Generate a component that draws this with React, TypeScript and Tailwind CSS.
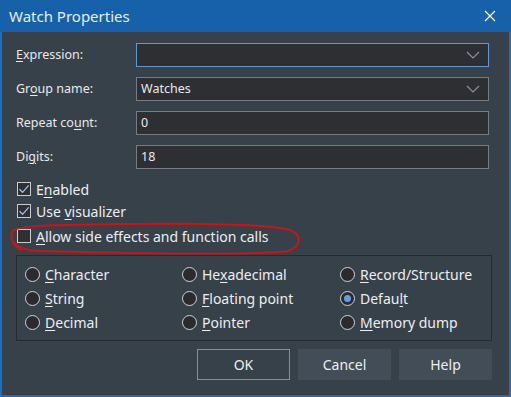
import React from "react";

const font = { fontFamily: '"Noto Sans", "Open Sans", sans-serif' };

function U({ children }: { children: React.ReactNode }) {
  return <span className="underline underline-offset-2 decoration-1">{children}</span>;
}

function Chevron() {
  return (
    <svg width="14" height="8" viewBox="0 0 14 8" className="shrink-0">
      <path d="M1 1 L7 7 L13 1" fill="none" stroke="#8a9099" strokeWidth="1.2" />
    </svg>
  );
}

function Field({
  label,
  value,
  combo,
  focused,
}: {
  label: React.ReactNode;
  value?: string;
  combo?: boolean;
  focused?: boolean;
}) {
  return (
    <div className="flex items-center h-[24px]">
      <div className="w-[120px] text-[12.5px] text-[#e8eaec]">{label}</div>
      <div
        className={`w-[353px] h-[24px] flex items-center justify-between pl-[4px] pr-[8px] bg-[#2e2f33] border ${
          focused ? "border-[#5b9ad6]" : "border-[#767c84]"
        } text-[12.5px] text-[#e8eaec]`}
      >
        <span>{value}</span>
        {combo && <Chevron />}
      </div>
    </div>
  );
}

function Check({ checked, children }: { checked?: boolean; children: React.ReactNode }) {
  return (
    <div className="flex items-center gap-[5px] text-[14px] text-[#eceef0]">
      <div className="w-[14px] h-[14px] border border-[#c9ccd0] bg-[#2e3035] flex items-center justify-center">
        {checked && (
          <svg width="12" height="12" viewBox="0 0 12 12">
            <path d="M1.5 6.2 L4.6 9.3 L10.6 2.3" fill="none" stroke="#9cc3ea" strokeWidth="1.3" />
          </svg>
        )}
      </div>
      <span>{children}</span>
    </div>
  );
}

function Radio({ checked, children }: { checked?: boolean; children: React.ReactNode }) {
  return (
    <div className="flex items-center gap-[5px] h-[24px] text-[14px] text-[#eceef0]">
      <div className="w-[15px] h-[15px] rounded-full border border-[#d2d4d7] bg-[#2a2b2f] flex items-center justify-center">
        {checked && <div className="w-[7px] h-[7px] rounded-full bg-[#5aa3e6]" />}
      </div>
      <span>{children}</span>
    </div>
  );
}

function Btn({ children, primary }: { children: React.ReactNode; primary?: boolean }) {
  return (
    <div
      className={`w-[93px] h-[31px] flex items-center justify-center text-[14px] text-[#eceef0] ${
        primary ? "border border-[#5b9ad6] bg-[#37414a]" : "bg-[#434d57]"
      }`}
    >
      {children}
    </div>
  );
}

export default function App() {
  return (
    <div
      style={font}
      className="w-[511px] h-[397px] bg-[#1c6fc4] px-[2px] pb-[2px] flex flex-col relative overflow-hidden"
    >
      <div className="h-[32px] bg-[#1661aa] -mx-[2px] flex items-center justify-between pl-[9px] pr-[15px]">
        <span className="text-[15px] text-[#e6edf5]">Watch Properties</span>
        <svg width="12" height="12" viewBox="0 0 12 12">
          <path d="M1 1 L11 11 M11 1 L1 11" stroke="#ffffff" strokeWidth="1.3" />
        </svg>
      </div>
      <div className="flex-1 bg-[#37414a] pl-[14px] pt-[11px] flex flex-col">
        <div className="flex flex-col gap-[10px]">
          <Field label={<><U>E</U>xpression:</>} combo focused />
          <Field label={<>Gr<U>o</U>up name:</>} value="Watches" combo />
          <Field label={<>Repeat co<U>u</U>nt:</>} value="0" />
          <Field label={<>Di<U>g</U>its:</>} value="18" />
        </div>
        <div className="mt-[9px] flex flex-col">
          <div className="h-[22px] flex items-center pl-[1px]">
            <Check checked>E<U>n</U>abled</Check>
          </div>
          <div className="h-[22px] flex items-center pl-[1px]">
            <Check checked>Use <U>v</U>isualizer</Check>
          </div>
          <div className="h-[24px] mt-[2px] flex items-center pl-[1px]">
            <Check><U>A</U>llow side effects and function calls</Check>
          </div>
        </div>
        <div className="mt-[7px] w-[476px] border border-[#262b31] pl-[8px] py-[6px] grid grid-cols-[157px_158px_1fr]">
          <Radio><U>C</U>haracter</Radio>
          <Radio>He<U>x</U>adecimal</Radio>
          <Radio><U>R</U>ecord/Structure</Radio>
          <Radio><U>S</U>tring</Radio>
          <Radio><U>F</U>loating point</Radio>
          <Radio checked>Defau<U>l</U>t</Radio>
          <Radio><U>D</U>ecimal</Radio>
          <Radio><U>P</U>ointer</Radio>
          <Radio><U>M</U>emory dump</Radio>
        </div>
        <div className="mt-[8px] flex gap-[8px] w-[476px] justify-end">
          <Btn primary>OK</Btn>
          <Btn>Cancel</Btn>
          <Btn>Help</Btn>
        </div>
      </div>
      <svg
        className="absolute left-0 top-0 pointer-events-none"
        width="511"
        height="397"
        viewBox="0 0 511 397"
      >
        <path
          d="M21 250 C 14 246, 10 240, 12 232 C 14 226, 40 225, 120 224 C 200 223, 270 224, 290 230 C 302 235, 302 246, 288 251 C 250 256, 120 253, 40 251 C 28 251, 20 249, 14 243"
          fill="none"
          stroke="#c5161d"
          strokeWidth="2"
          strokeLinecap="round"
        />
      </svg>
    </div>
  );
}
